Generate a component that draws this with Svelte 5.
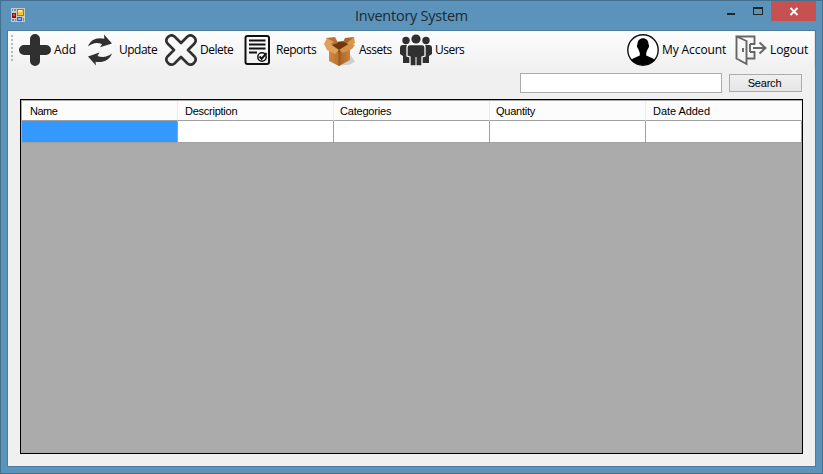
<script>
  const columns = [
    { name: 'Name', spacing: -0.5 },
    { name: 'Description', spacing: -0.25 },
    { name: 'Categories', spacing: -0.2 },
    { name: 'Quantity', spacing: -0.25 },
    { name: 'Date Added', spacing: -0.05 }
  ];
  let query = $state('');
</script>

<div class="window">
  <header class="titlebar">
    <svg class="appicon" width="14" height="14" viewBox="0 0 14 14" shape-rendering="crispEdges">
      <path fill="#c9c9c5" d="M0 0h14v14H0z" />
      <path fill="#6a91ae" d="M1 1h1v2H1zM3 1h2v2H3zM1 11h2v2H1zM4 11h1v2H4zM12 10h1v3h-1z" />
      <path fill="#a8791b" d="M6 1h7v7H6z" /><path fill="#f5c83a" d="M7 2h5v5H7z" /><path fill="#ffe995" d="M7 2h4v2H7z" />
      <path fill="#8d1511" d="M1 5h4v5H1z" /><path fill="#e04a38" d="M2 6h2v2H2z" />
      <path fill="#285bc0" d="M6 9h5v4H6z" /><path fill="#82b2fb" d="M7 10h3v2H7z" />
    </svg>
    <h1>Inventory System</h1>
    <div class="controls">
      <svg width="8" height="20" shape-rendering="crispEdges"><path d="M0 12h8v2H0z" fill="#242424" /></svg>
      <svg class="max" width="10" height="20" shape-rendering="crispEdges">
        <path fill="#242424" fill-rule="evenodd" d="M0 6h10v8H0zM1 8v5h8V8z" />
      </svg>
      <svg class="close" width="45" height="20"><path d="M19.500 7l7 7M26.500 7l-7 7" stroke="#fff" stroke-width="1.9" /></svg>
    </div>
  </header>

  <main>
    <nav>
      <span class="grip"></span>
      <button style="width: 65px">
        <svg width="32" height="32" viewBox="0 0 32 32"><path d="M16 5v22M5 16h22" stroke="#303030" stroke-width="10" stroke-linecap="round" /></svg>
        <span>Add</span>
      </button>
      <button class="tight" style="width: 81px">
        <svg width="32" height="32" viewBox="0 0 32 32" fill="#303030">
          <path d="M4 12.500C6.500 5.500 13 3 20.300 4.800L20 0.500 28 9.500 16 13.200 18 10.200C13 8 8.500 9 4 12.500z" />
          <path d="M28 19.500C25.500 26.500 18 29.200 11.500 27.700L12 31.500 4 22.500 15.500 18.500 13.500 22C18.500 24 23.500 23 28 19.500z" />
        </svg>
        <span>Update</span>
      </button>
      <button class="tight" style="width: 76px">
        <svg width="32" height="32" viewBox="0 0 32 32" fill="none" stroke="#303030" stroke-width="2.6" stroke-linejoin="round">
          <path d="M9.500 2.500 16 9l6.500-6.500c4.500-3.500 10.500 2.500 7 7L23 16l6.500 6.500c3.500 4.500-2.500 10.500-7 7L16 23l-6.500 6.500c-4.500 3.500-10.500-2.500-7-7L9 16 2.500 9.500C-1 5 5-1 9.500 2.500z" />
        </svg>
        <span>Delete</span>
      </button>
      <button class="tight" style="width: 83px">
        <svg width="32" height="32" viewBox="0 0 32 32" fill="none" stroke="#111">
          <rect x="4.500" y="2" width="23.500" height="28" rx="2" stroke-width="2" />
          <path d="M8 6.500h16.500M8 10.500h16.500M8 14.500h16.500M8 18.500h8" stroke-width="2" />
          <circle cx="21" cy="23" r="4.200" stroke-width="1.500" fill="#f7f7f7" />
          <path d="m18.500 22.500 2.200 2.200 4.800-5.500" stroke-width="2" />
        </svg>
        <span>Reports</span>
      </button>
      <button class="tight" style="width: 76px">
        <svg width="32" height="32" viewBox="0 0 32 32">
          <defs>
            <linearGradient id="side"><stop stop-color="#d08a42" /><stop offset="1" stop-color="#b97230" /></linearGradient>
            <linearGradient id="front"><stop stop-color="#a96022" /><stop offset="1" stop-color="#c8843f" /></linearGradient>
          </defs>
          <path d="m16 31.500 10-1 5-3-5-7z" fill="#999" opacity=".4" />
          <path d="m5 12 7-4 8-1 6 4-11 8z" fill="#70370f" />
          <path d="m5 13 10 5v14L5 27z" fill="url(#side)" />
          <path d="m15 18 11-5v13l-11 6z" fill="url(#front)" />
          <path d="m2 4 9-1 3 6-6 2z" fill="#b97130" />
          <path d="m3 4-3 6 5 1 5-3z" fill="#dda05a" />
          <path d="m21 4 9-1-3 7-8-2z" fill="#b06628" />
          <path d="m30 3 1 6-5 3-3-3z" fill="#d8964e" />
          <path d="m0 10 5-1 10 7-4 4-8-4z" fill="#dfa15c" />
          <path d="m15 16 11-7 5 2-3 4-9 4z" fill="#d4924b" />
          <path d="M15 18v14" stroke="#8d4d19" stroke-width=".7" />
        </svg>
        <span>Assets</span>
      </button>
      <button class="tight" style="width: 66px">
        <svg width="32" height="32" viewBox="0 0 32 32" fill="#303030">
          <circle cx="6" cy="6.500" r="3.700" /><circle cx="26" cy="6.500" r="3.700" />
          <path d="M0 14q0-3 3-3h6l1 10v8H3v-7l-3-2zM32 14q0-3-3-3h-6l-1 10v8h7v-7l3-2z" />
          <path d="M10 10.500h12q3 0 3 3V22l-3 1v9H10v-9l-3-1v-8.500q0-3 3-3z" stroke="#f9f9f9" stroke-width="1.300" />
          <circle cx="16" cy="5" r="4.600" /><path d="M15.500 23h1v9h-1z" fill="#f5f5f5" />
        </svg>
        <span>Users</span>
      </button>
      <button class="account" style="width: 108px">
        <svg width="32" height="32" viewBox="0 0 32 32">
          <circle cx="16" cy="16" r="15.200" fill="#fff" stroke="#111" stroke-width="1.400" />
          <path d="M10.500 10.500C10 2 22 2 21.500 10.500q1 0 .2 3l-1.200 2-1.300 3.500v2.500L26 24.500q2 1 1.500 2.500Q22 31 16 31T4.500 27q-.5-1.500 1.500-2.500l6.800-3V19l-1.300-3.500-1.200-2q-.8-3 .2-3z" />
        </svg>
        <span>My Account</span>
      </button>
      <button style="width: 79px">
        <svg width="32" height="32" viewBox="0 0 32 32" fill="none" stroke="#666" stroke-width="1.900">
          <path d="M1.500 2.500 11.500 7v23L1.500 24.500zM1.500 2.500h18V10M11.500 24.500h8V18M15 10h5.400M15 18h5.400M15 18v-8M18 14h12M24.500 8.500l6 5.500-6 5.500M8 14v4" />
        </svg>
        <span>Logout</span>
      </button>
    </nav>

    <form class="search" onsubmit={(e) => e.preventDefault()}>
      <input type="text" bind:value={query} aria-label="Search inventory" />
      <button type="submit">Search</button>
    </form>

    <div class="grid">
      <table>
        <thead><tr>{#each columns as column}<th style="letter-spacing: {column.spacing}px">{column.name}</th>{/each}</tr></thead>
        <tbody><tr>{#each columns as column, i}<td class:selected={i === 0}></td>{/each}</tr></tbody>
      </table>
    </div>
  </main>
</div>

<style>
  :global(body) { margin: 0; }
  * { box-sizing: border-box; }
  .window { width: 823px; height: 474px; padding: 0 6px 6px; border: 1px solid #44708f; background: #5b93ba; display: flex; flex-direction: column; }
  .titlebar { height: 29px; flex: none; display: grid; grid-template-columns: 120px 1fr 120px; align-items: start; }
  .appicon { margin: 7px 0 0 4px; }
  h1 { margin: 5px 0 0; text-align: center; font: 14.5px/20px "Open Sans", sans-serif; letter-spacing: -.25px; color: #202a31; }
  .controls { display: flex; justify-content: flex-end; }
  .controls svg { display: block; flex: none; }
  .controls .max { margin: 0 8px 0 18px; }
  .controls .close { background: #c75050; }
  main { flex: 1; border: 1px solid #4d7c9e; background: #f0f0f0; min-height: 0; }
  nav { height: 38px; display: flex; align-items: center; padding-left: 3px; background: linear-gradient(#fdfdfd, #f0f0f0); border-radius: 0 0 3px 0; border-right: 1px solid #e2e2e2; }
  .grip { width: 2px; height: 27px; margin: -3px 6px 0 0; background: repeating-linear-gradient(#b9b9b9 0 2px, transparent 2px 4px); }
  nav button { height: 36px; padding: 0; border: 0; background: none; display: flex; align-items: center; gap: 3px; flex: none; font: 12px/16px "Open Sans", sans-serif; letter-spacing: -.1px; color: #000; white-space: nowrap; text-align: left; }
  nav .tight { letter-spacing: -.5px; }
  nav svg { flex: none; display: block; }
  nav .account { margin-left: auto; }
  .search { margin: 4px 13px 0 0; display: flex; justify-content: flex-end; align-items: center; gap: 7px; height: 20px; }
  .search input { width: 202px; height: 20px; padding: 0 3px; border: 1px solid #ababab; background: #fff; outline: 0; }
  .search button { width: 73px; height: 18px; padding: 0 2px 0 0; border: 1px solid #acacac; background: linear-gradient(#f0f0f0, #e5e5e5); font: 11px/16px "Liberation Sans", sans-serif; letter-spacing: -.2px; color: #000; }
  .grid { width: 783px; height: 355px; margin: 6px 0 0 12px; border: 1px solid #000; background: #ababab; padding: 1px 0 0 1px; }
  table { border-collapse: separate; border-spacing: 0; table-layout: fixed; width: 780px; }
  th { height: 20px; padding: 0 0 0 7px; border-right: 1px solid #e3eef9; border-bottom: 1px solid #a0a0a0; background: #fcfcfc; font: 11px/18px "Liberation Sans", sans-serif; text-align: left; color: #000; }
  th:first-child { padding-left: 8px; }
  th:nth-child(3), th:nth-child(4) { padding-left: 6px; }
  td { height: 22px; padding: 0; border-right: 1px solid #a0a0a0; border-bottom: 1px solid #a0a0a0; background: #fff; }
  td.selected { background: #39f; }
</style>
